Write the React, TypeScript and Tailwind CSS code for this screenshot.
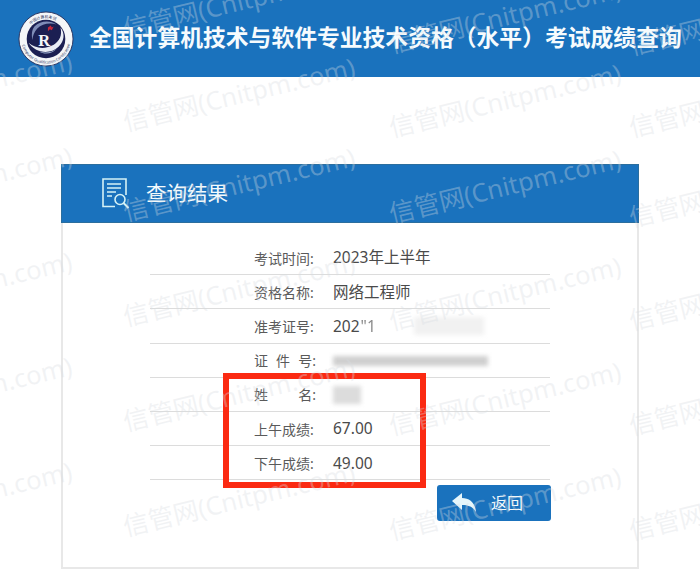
const cjk = '"Noto Sans", "Noto Sans CJK SC", sans-serif';

const marks = [
  "left-[-156px] top-[-4px]",
  "left-[127px] top-[14px]",
  "left-[393px] top-[29px]",
  "left-[633px] top-[31px]",
  "left-[-156px] top-[101px]",
  "left-[127px] top-[107px]",
  "left-[393px] top-[113px]",
  "left-[633px] top-[113px]",
  "left-[-156px] top-[196px]",
  "left-[127px] top-[197px]",
  "left-[393px] top-[199px]",
  "left-[633px] top-[203px]",
  "left-[-156px] top-[301px]",
  "left-[127px] top-[302px]",
  "left-[393px] top-[306px]",
  "left-[633px] top-[306px]",
  "left-[-156px] top-[406px]",
  "left-[127px] top-[407px]",
  "left-[393px] top-[411px]",
  "left-[633px] top-[411px]",
  "left-[-156px] top-[511px]",
  "left-[127px] top-[512px]",
  "left-[393px] top-[516px]",
  "left-[633px] top-[516px]",
];

function Logo() {
  return (
    <svg width="56" height="56" viewBox="0 0 58 58" className="shrink-0">
      <defs>
        <path id="ring-top" d="M7.5 29a21.5 21.5 0 0 1 43 0" />
        <path id="ring-bottom" d="M3.5 29a25.5 25.5 0 0 0 51 0" />
      </defs>
      <circle cx="29" cy="29" r="28" fill="#f4f6f8" stroke="#2a3560" strokeWidth="1" />
      <circle cx="29" cy="29" r="20" fill="#1b1f52" />
      <path d="M11 33c6 10 22 13 31 4 6-6 7-14 2-20 2 8-1 14-7 18-9 5-19 4-26-2z" fill="#e8ecf4" />
      <path d="M17 16c6-6 16-7 23-2-7-2-15-1-20 4-3 3-5 8-5 12-1-5-1-10 2-14z" fill="#7f8db8" />
      <path d="M22 42c6 2 13 1 18-3-4 5-12 7-18 3z" fill="#9fb0d0" />
      <text x="27" y="36" textAnchor="middle" fontSize="17" fontWeight="700" fill="#f4f6f8" fontFamily='"Liberation Serif", serif'>
        R
      </text>
      <path d="M31 17l3-2 1 2 2-1-2 4-2-1-2 2z" fill="#c8283c" />
      <text fontSize="4" fill="#2a3560" fontFamily={cjk}>
        <textPath href="#ring-top" startOffset="24%">中国计算机考试</textPath>
      </text>
      <text fontSize="4" fill="#2a3560" fontFamily={cjk}>
        <textPath href="#ring-bottom" startOffset="8%">Computer Qualification Certification</textPath>
      </text>
    </svg>
  );
}

function ResultIcon() {
  return (
    <svg width="28" height="32" viewBox="0 0 28 32" fill="none" stroke="#d5f2f6" strokeWidth="1.6" className="shrink-0">
      <path d="M13 28.5H1V1h23v16" />
      <path d="M5 6h14M5 10h14M5 14h9M5 18h5" />
      <circle cx="18" cy="21.5" r="5" />
      <path d="M21.5 25l5 5" strokeWidth="2" />
    </svg>
  );
}

function Row({ label, children }: { label: React.ReactNode; children?: React.ReactNode }) {
  return (
    <div className="flex h-[34.2px] items-center border-b border-[#dcdcdc] pl-[104px] pt-[1px]">
      <div className="flex w-[62px] justify-between text-[14px] text-[#5a5a5a]">{label}</div>
      <div className="ml-[17px] flex items-center text-[15.5px] text-[#4a4a4a]">{children}</div>
    </div>
  );
}

export default function App() {
  return (
    <div className="relative h-[574px] w-[700px] overflow-hidden bg-white" style={{ fontFamily: cjk }}>
      <header className="flex h-[77px] items-center bg-[#1a72bd] pl-[18px]">
        <Logo />
        <h1 className="ml-[15px] whitespace-nowrap text-[22.8px] font-bold text-[#f6fbfd]">
          全国计算机技术与软件专业技术资格{"\uFF08"}水平{"\uFF09"}考试成绩查询
        </h1>
      </header>

      <main className="ml-[61px] mt-[87px] h-[405px] w-[578px] border-x-2 border-b-2 border-[#e8e8e8]">
        <div className="-mx-[2px] flex h-[59px] items-center border border-[#2b6e9e] bg-[#1a72bd] pl-[40px]">
          <ResultIcon />
          <span className="ml-[16px] text-[20.5px] text-[#f4fbfd]">查询结果</span>
        </div>

        <div className="ml-[87px] mt-[18px] w-[400px]">
          <Row label="考试时间:">2023年上半年</Row>
          <Row label="资格名称:">网络工程师</Row>
          <Row label="准考证号:">
            <span>202</span>
            <span className="ml-[1px] text-[#8a8a8a] blur-[0.6px]">"1</span>
            <span className="ml-[38px] h-[18px] w-[70px] bg-[#f1f1f1] blur-[2px]" />
          </Row>
          <Row
            label={
              <>
                <span>证</span>
                <span>件</span>
                <span>号:</span>
              </>
            }
          >
            <span className="h-[10px] w-[155px] bg-[#cfcfcf] blur-[2px]" />
          </Row>
          <Row
            label={
              <>
                <span>姓</span>
                <span>名:</span>
              </>
            }
          >
            <span className="h-[18px] w-[28px] bg-[#dcdcdc] blur-[2px]" />
          </Row>
          <Row label="上午成绩:">67.00</Row>
          <Row label="下午成绩:">49.00</Row>
          <div className="mt-[5px] flex justify-end">
            <button className="-mr-[1px] flex h-[36px] w-[114px] items-center rounded-[3px] bg-[#1a72bd] pl-[15px] text-[16px] text-[#f4fbfd]">
              <svg width="24" height="20" viewBox="0 0 24 20" fill="#e6f6fb" className="shrink-0">
                <path d="M0 8L10 0v5c7 0 13 4 14 14-3-5-7-7-14-7v5z" />
              </svg>
              <span className="ml-[15px]">返回</span>
            </button>
          </div>
        </div>
      </main>

      <div className="absolute left-[223px] top-[373px] h-[115px] w-[203px] border-[6px] border-[#fb2a12]" />

      <div className="pointer-events-none absolute inset-0">
        {marks.map((pos) => (
          <span
            key={pos}
            className={`absolute ${pos} origin-bottom-left -rotate-[13.5deg] whitespace-nowrap text-[25.5px] leading-[29px] text-[rgba(215,220,225,0.35)]`}
          >
            信管网(Cnitpm.com)
          </span>
        ))}
      </div>
    </div>
  );
}
